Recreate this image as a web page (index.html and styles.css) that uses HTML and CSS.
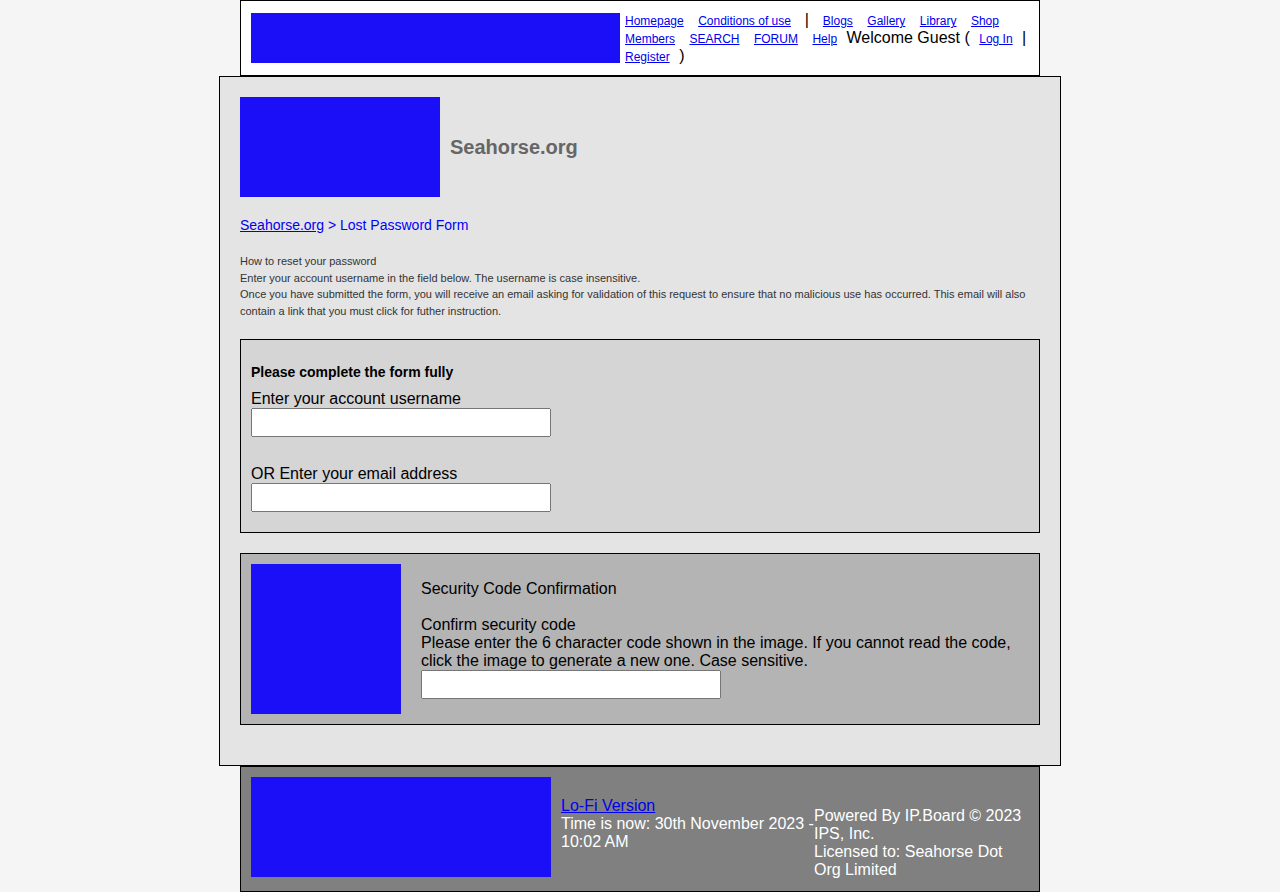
FILE: index.html
```html
<!DOCTYPE html>
<html lang="en">
<head>
<meta charset="utf-8">
<title>Seahorse.org - Lost Password Form</title>
<link rel="stylesheet" href="styles.css">
</head>
<body>
<header class="site-header">
  <div class="block header-logo"></div>
  <nav class="site-nav">
    <a href="#">Homepage</a>
    <a href="#">Conditions of use</a>
    &nbsp;|&nbsp;
    <a href="#">Blogs</a>
    <a href="#">Gallery</a>
    <a href="#">Library</a>
    <a href="#">Shop</a>
    <a href="#">Members</a>
    <a href="#">SEARCH</a>
    <a href="#">FORUM</a>
    <a href="#">Help</a>
    Welcome Guest (
    <a href="#">Log In</a>
    |
    <a href="#">Register</a>
    )
  </nav>
</header>

<main class="content">
  <div class="brand">
    <div class="block brand-image"></div>
    <h1 class="brand-title">Seahorse.org</h1>
  </div>

  <div class="breadcrumb"><a href="#">Seahorse.org</a> &gt; Lost Password Form</div>

  <div class="instructions">
    How to reset your password<br>
    Enter your account username in the field below. The username is case insensitive.<br>
    Once you have submitted the form, you will receive an email asking for validation of this request to ensure that no malicious use has occurred. This email will also contain a link that you must click for futher instruction.
  </div>

  <form>
    <section class="panel account">
      <h2 class="panel-title">Please complete the form fully</h2>
      <div class="field">
        <label for="username">Enter your account username</label>
        <input class="text-input" type="text" id="username">
      </div>
      <div class="field">
        <label for="email">OR Enter your email address</label>
        <input class="text-input" type="text" id="email">
      </div>
    </section>

    <section class="panel security">
      <div class="block code-image"></div>
      <div class="security-body">
        <p class="security-title">Security Code Confirmation</p>
        <div class="field">
          <label for="code">Confirm security code<br>
          Please enter the 6 character code shown in the image. If you cannot read the code, click the image to generate a new one. Case sensitive.</label>
          <input class="text-input" type="text" id="code">
        </div>
      </div>
    </section>
  </form>
</main>

<footer class="site-footer">
  <div class="block footer-image"></div>
  <div class="footer-time"><a href="#">Lo-Fi Version</a><br>Time is now: 30th November 2023 - 10:02 AM</div>
  <div class="footer-legal">Powered By IP.Board © 2023 IPS, Inc.<br>Licensed to: Seahorse Dot Org Limited</div>
</footer>
</body>
</html>
```
FILE: styles.css
```css
* {
  box-sizing: border-box;
}

body {
  margin: 0;
  background: #f5f5f5;
  color: #000;
  font-family: "Liberation Sans", Arial, sans-serif;
  font-size: 16px;
  line-height: 18px;
}

a {
  color: #0000ee;
}

.block {
  flex: none;
  background: #1b0ff8;
}

.site-header,
.site-footer {
  display: flex;
  max-width: 800px;
  margin: 0 auto;
  padding: 10px;
  border: 1px solid #000;
}

.site-header {
  align-items: center;
  background: #fff;
}

.header-logo {
  flex: 1;
  height: 50px;
}

.site-nav {
  flex: 0 1 409px;
}

.site-nav a {
  margin: 0 5px;
  font-size: 12px;
  line-height: 1;
}

.content {
  max-width: 842px;
  margin: 0 auto;
  padding: 20px;
  border: 1px solid #000;
  background: #e4e4e4;
}

.brand {
  display: flex;
  align-items: center;
  gap: 10px;
  margin-bottom: 20px;
}

.brand-image {
  width: 200px;
  height: 100px;
}

.brand-title {
  margin: 0;
  color: #666;
  font-size: 20px;
}

.breadcrumb {
  margin-bottom: 20px;
  color: #0000ff;
  font-size: 14px;
  line-height: 16px;
}

.instructions {
  margin-bottom: 20px;
  color: #333;
  font-size: 11px;
  line-height: 1.5;
}

.panel {
  margin-bottom: 20px;
  padding: 10px;
  border: 1px solid #000;
}

.account {
  padding: 24px 10px 20px;
  background: #d5d5d5;
}

.panel-title {
  margin: 0 0 10px;
  font-size: 14px;
  line-height: 16px;
}

.field {
  display: flex;
  flex-direction: column;
  align-items: flex-start;
}

.field + .field {
  margin-top: 28px;
}

.text-input {
  width: 300px;
  max-width: 100%;
  height: 29px;
  padding: 5px;
}

.security {
  display: flex;
  align-items: center;
  gap: 20px;
  background: #b4b4b4;
}

.code-image {
  width: 150px;
  height: 150px;
}

.security-title {
  margin: 0 0 18px;
}

.site-footer {
  align-items: flex-start;
  min-height: 126px;
  background: #808080;
  color: #fff;
}

.footer-image {
  width: 300px;
  height: 100px;
  margin-right: 10px;
}

.footer-time {
  flex: 0 1 253px;
  padding-top: 20px;
}

.footer-legal {
  flex: 1;
  padding-top: 30px;
}
```
